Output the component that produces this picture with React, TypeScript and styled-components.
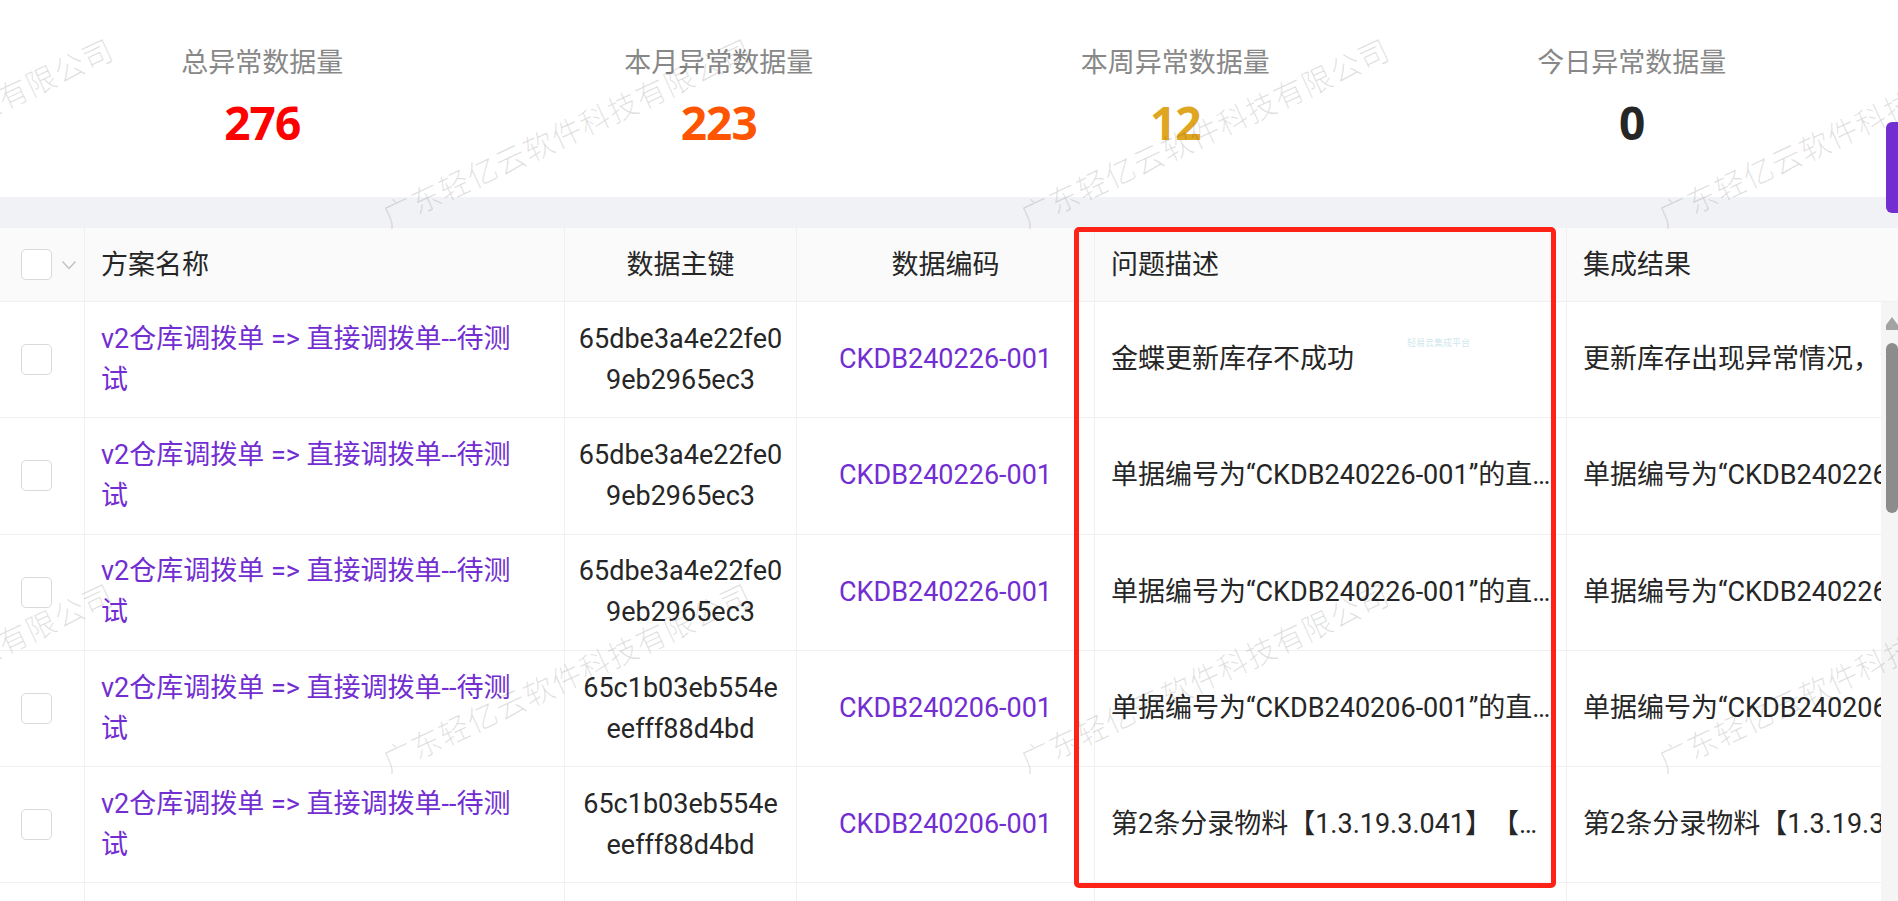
import React from 'react';
import styled, { createGlobalStyle } from 'styled-components';

const GlobalStyle = createGlobalStyle`
  html, body {
    margin: 0;
    padding: 0;
    background: #fff;
  }
  body {
    font-family: Roboto, "Noto Sans CJK SC", sans-serif;
    overflow: hidden;
  }
  * {
    box-sizing: border-box;
  }
`;

const GRID = '85px 480px 232px 298px 472px 420px';

const stats = [
  { label: '总异常数据量', value: '276', color: '#ff0000' },
  { label: '本月异常数据量', value: '223', color: '#ff5500' },
  { label: '本周异常数据量', value: '12', color: '#dfa622' },
  { label: '今日异常数据量', value: '0', color: '#262626' },
];

const NAME = 'v2仓库调拨单 => 直接调拨单--待测试';

const rows = [
  {
    pk: ['65dbe3a4e22fe0', '9eb2965ec3'],
    code: 'CKDB240226-001',
    desc: '金蝶更新库存不成功',
    result: '更新库存出现异常情况，请检查即时库存',
  },
  {
    pk: ['65dbe3a4e22fe0', '9eb2965ec3'],
    code: 'CKDB240226-001',
    desc: '单据编号为“CKDB240226-001”的直接调拨单，审核失败',
    result: '单据编号为“CKDB240226-001”的直接调拨单，审核失败',
  },
  {
    pk: ['65dbe3a4e22fe0', '9eb2965ec3'],
    code: 'CKDB240226-001',
    desc: '单据编号为“CKDB240226-001”的直接调拨单，审核失败',
    result: '单据编号为“CKDB240226-001”的直接调拨单，审核失败',
  },
  {
    pk: ['65c1b03eb554e', 'eefff88d4bd'],
    code: 'CKDB240206-001',
    desc: '单据编号为“CKDB240206-001”的直接调拨单，审核失败',
    result: '单据编号为“CKDB240206-001”的直接调拨单，审核失败',
  },
  {
    pk: ['65c1b03eb554e', 'eefff88d4bd'],
    code: 'CKDB240206-001',
    desc: '第2条分录物料【1.3.19.3.041】【调拨数量】超出即时库存',
    result: '第2条分录物料【1.3.19.3.041】【调拨数量】超出即时库存',
  },
  { pk: [], code: '', desc: '', result: '' },
];

// watermark anchors: bottom-left of the first glyph
const marks = [-248, 390, 1028, 1666].flatMap((x) => [230, 775].map((y) => ({ x, y })));

function App() {
  return (
    <>
      <GlobalStyle />
      <Page>
        <StatsBar>
          {stats.map((s) => (
            <StatItem key={s.label}>
              <StatLabel>{s.label}</StatLabel>
              <StatValue $color={s.color}>{s.value}</StatValue>
            </StatItem>
          ))}
        </StatsBar>
        <Band />
        <Table>
          <HeaderRow>
            <CheckCell>
              <Checkbox />
              <svg width="16" height="10" viewBox="0 0 16 10">
                <polyline points="1.5,1.5 8,8.5 14.5,1.5" fill="none" stroke="#bfbfbf" strokeWidth="1.3" />
              </svg>
            </CheckCell>
            <HeadCell $align="left">方案名称</HeadCell>
            <HeadCell $align="center">数据主键</HeadCell>
            <HeadCell $align="center">数据编码</HeadCell>
            <HeadCell $align="left">问题描述</HeadCell>
            <HeadCell $align="left">集成结果</HeadCell>
          </HeaderRow>
          <BodyArea>
            <BodyViewport>
              {rows.map((r, i) => (
                <Row key={i}>
                  <CheckCell>{r.code && <Checkbox />}</CheckCell>
                  <NameCell>{r.code && <LinkText>{NAME}</LinkText>}</NameCell>
                  <Cell $align="center">
                    <KeyText>
                      {r.pk.map((line) => (
                        <span key={line}>{line}</span>
                      ))}
                    </KeyText>
                  </Cell>
                  <Cell $align="center">
                    <LinkText>{r.code}</LinkText>
                  </Cell>
                  <DescCell>
                    <Ellipsis>{r.desc}</Ellipsis>
                  </DescCell>
                  <Cell $align="left">
                    <Plain>{r.result}</Plain>
                  </Cell>
                </Row>
              ))}
            </BodyViewport>
            <Scrollbar>
              <svg width="12" height="13" viewBox="0 0 12 13">
                <polygon points="6,0 12,8 12,13 0,13 0,8" fill="#a3a3a3" />
              </svg>
              <Thumb />
            </Scrollbar>
          </BodyArea>
        </Table>

        <Overlay>
          {marks.map((m, i) => (
            <Watermark key={i} $x={m.x} $y={m.y}>
              广东轻亿云软件科技有限公司
            </Watermark>
          ))}
          <FaintTag>轻易云集成平台</FaintTag>
          <Annotation />
          <SideTab />
        </Overlay>
      </Page>
    </>
  );
}

const Page = styled.div`
  position: relative;
  width: 1898px;
  height: 901px;
  overflow: hidden;
  background: #fff;
`;

const StatsBar = styled.section`
  height: 197px;
  padding: 43px 38px 0 34px;
  display: grid;
  grid-template-columns: repeat(4, 1fr);
`;

const StatItem = styled.div`
  display: flex;
  flex-direction: column;
  align-items: center;
`;

const StatLabel = styled.div`
  font-size: 27px;
  line-height: 40px;
  color: #888888;
`;

const StatValue = styled.div<{ $color: string }>`
  margin-top: 9px;
  font-family: "Noto Sans", "Open Sans", sans-serif;
  font-size: 46px;
  font-weight: 700;
  line-height: 60px;
  letter-spacing: -1px;
  color: ${(p) => p.$color};
`;

const Band = styled.div`
  height: 31px;
  background: #f0f2f5;
`;

const Table = styled.div`
  font-size: 27px;
  color: #262626;
  text-spacing-trim: space-all;
`;

const HeaderRow = styled.div`
  display: grid;
  grid-template-columns: ${GRID};
  width: max-content;
  height: 74px;
  background: #fafafa;
  border-bottom: 1px solid #f0f0f0;
`;

const CheckCell = styled.div`
  display: flex;
  align-items: center;
  gap: 9px;
  padding-left: 21px;
  border-right: 1px solid #f0f0f0;
`;

const Checkbox = styled.span`
  display: block;
  width: 31px;
  height: 31px;
  border: 1px solid #d9d9d9;
  border-radius: 5px;
  background: #fff;
`;

const HeadCell = styled.div<{ $align: 'left' | 'center' }>`
  display: flex;
  align-items: center;
  justify-content: ${(p) => (p.$align === 'center' ? 'center' : 'flex-start')};
  padding: 0 16px;
  line-height: 40px;
  border-right: 1px solid #f0f0f0;
`;

const BodyArea = styled.div`
  display: flex;
  height: 599px;
`;

const BodyViewport = styled.div`
  flex: 1;
  overflow: hidden;
`;

const Row = styled.div`
  display: grid;
  grid-template-columns: ${GRID};
  width: max-content;
  height: 116.3px;
  border-bottom: 1px solid #f0f0f0;
`;

const Cell = styled.div<{ $align: 'left' | 'center' }>`
  display: flex;
  align-items: center;
  justify-content: ${(p) => (p.$align === 'center' ? 'center' : 'flex-start')};
  text-align: ${(p) => p.$align};
  min-width: 0;
  padding: 0 16px;
  line-height: 41px;
  border-right: 1px solid #f0f0f0;
`;

const NameCell = styled(Cell).attrs({ $align: 'left' as const })`
  padding-right: 41px;
`;

const DescCell = styled(Cell).attrs({ $align: 'left' as const })`
  padding-right: 9px;
`;

const LinkText = styled.span`
  color: #722ed1;
`;

const KeyText = styled.div`
  display: flex;
  flex-direction: column;
  align-items: center;
`;

const Ellipsis = styled.span`
  display: block;
  width: 100%;
  white-space: nowrap;
  overflow: hidden;
  text-overflow: ellipsis;
`;

const Plain = styled.span`
  white-space: nowrap;
`;

const Scrollbar = styled.div`
  width: 17px;
  flex-shrink: 0;
  background: #f5f5f5;
  display: flex;
  flex-direction: column;
  align-items: flex-end;
  padding-top: 15px;
  gap: 13px;
`;

const Thumb = styled.div`
  width: 12px;
  height: 170px;
  border-radius: 6px;
  background: #8c8c8c;
`;

const Overlay = styled.div`
  position: absolute;
  inset: 0;
  pointer-events: none;
`;

const Watermark = styled.span<{ $x: number; $y: number }>`
  position: absolute;
  left: ${(p) => p.$x}px;
  top: ${(p) => p.$y - 30}px;
  font-family: "Noto Sans CJK SC", sans-serif;
  font-size: 30px;
  font-weight: 300;
  line-height: 30px;
  letter-spacing: 1px;
  white-space: nowrap;
  color: rgba(0, 0, 0, 0.12);
  transform-origin: left bottom;
  transform: rotate(-25deg);
`;

const FaintTag = styled.span`
  position: absolute;
  left: 1407px;
  top: 337px;
  font-size: 9px;
  line-height: 12px;
  color: #cfe8ee;
`;

const Annotation = styled.div`
  position: absolute;
  left: 1074px;
  top: 227px;
  width: 482px;
  height: 661px;
  border: 5px solid #ff2216;
  border-radius: 5px;
`;

const SideTab = styled.div`
  position: absolute;
  right: 0;
  top: 122px;
  width: 12px;
  height: 91px;
  border-radius: 6px 0 0 6px;
  background: #722ed1;
`;

export default App;
